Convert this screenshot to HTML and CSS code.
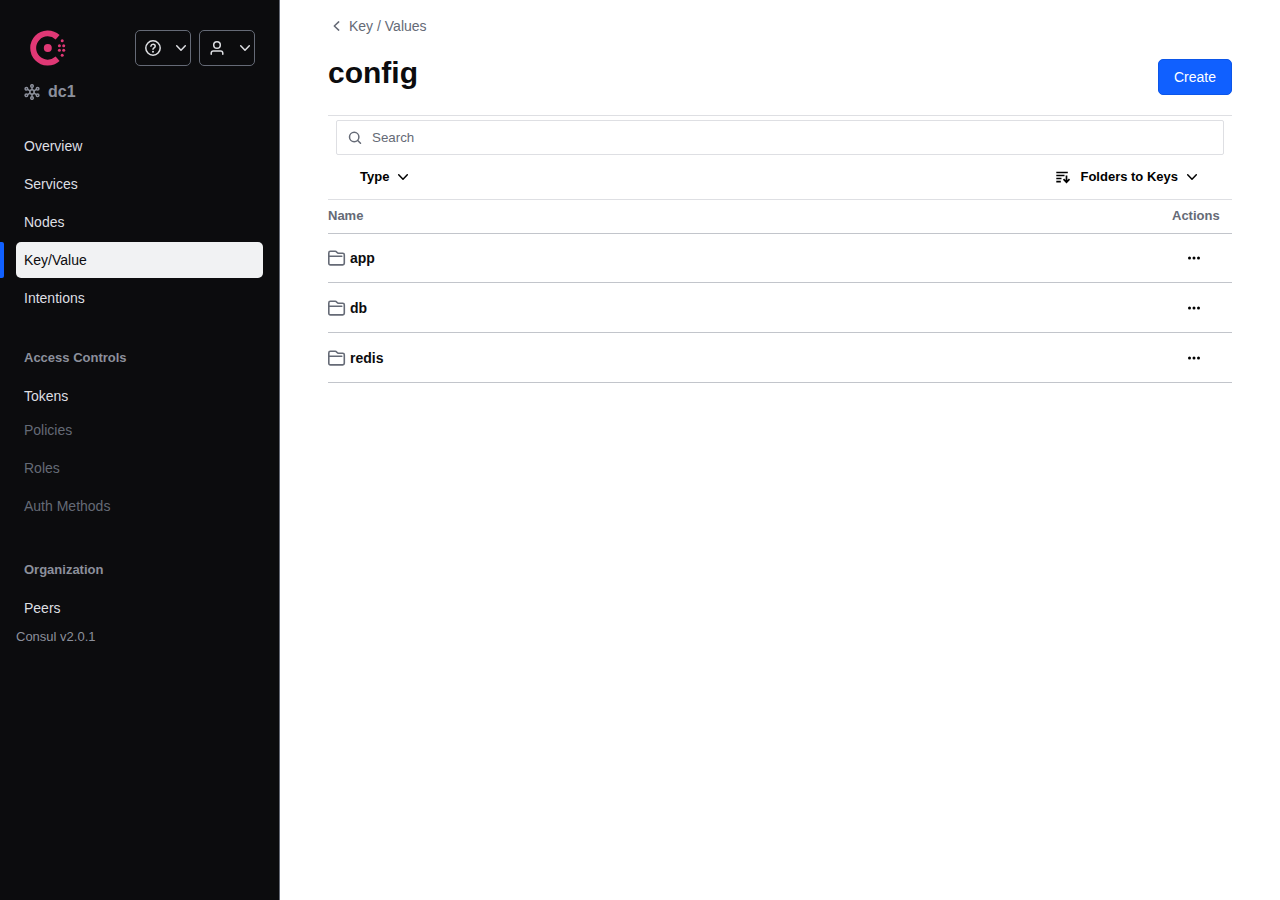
FILE: index.html
```html
<!DOCTYPE html>
<html lang="en">
<head>
<meta charset="utf-8">
<meta name="viewport" content="width=device-width, initial-scale=1">
<title>config - Key / Values - Consul</title>
<link rel="stylesheet" href="styles.css">
</head>
<body>
<div class="app">
  <aside class="sidebar">
    <header class="sidebar-header">
      <a class="logo" href="#" aria-label="Consul">
        <svg width="36" height="36" viewBox="0 0 36 36" fill="#e03875">
          <path d="M27.6 7.200 A14.600 14.600 0 1 0 27.600 28.800" fill="none" stroke="#e03875" stroke-width="5.900"/>
          <circle cx="17.800" cy="18" r="4"/>
          <circle cx="32.200" cy="10.800" r="1.500"/><circle cx="29.400" cy="15.700" r="1.500"/><circle cx="33.700" cy="15.700" r="1.500"/>
          <circle cx="29.400" cy="20.300" r="1.500"/><circle cx="33.700" cy="20.300" r="1.500"/><circle cx="32.200" cy="25.200" r="1.500"/>
        </svg>
      </a>
      <div class="header-actions">
        <button class="menu-button" type="button" aria-label="Help">
          <svg class="icon" viewBox="0 0 16 16"><circle cx="8" cy="8" r="7.200"/><path d="M5.900 6.200C6.100 4.900 7 4.300 8.100 4.300c1.200 0 2.100.8 2.100 1.900C10.200 7.700 8 7.900 8 9.200"/><circle class="dot" cx="8" cy="11.800" r="1"/></svg>
          <svg class="icon" viewBox="0 0 16 16"><path d="M3.700 5.800 8 10.300l4.300-4.500"/></svg>
        </button>
        <button class="menu-button" type="button" aria-label="Account">
          <svg class="icon" viewBox="0 0 16 16"><circle cx="8" cy="5" r="3.300"/><path d="M2.200 14.300v-1c0-1.300.9-2.200 2.200-2.200h7.200c1.300 0 2.200.9 2.200 2.200v1"/></svg>
          <svg class="icon" viewBox="0 0 16 16"><path d="M3.700 5.800 8 10.300l4.300-4.500"/></svg>
        </button>
      </div>
    </header>
    <div class="datacenter">
      <svg class="icon" viewBox="0 0 16 16"><circle cx="8" cy="8" r="2.200"/><circle cx="8" cy="2" r="1.300"/><circle cx="8" cy="14" r="1.300"/><circle cx="2.400" cy="4.800" r="1.300"/><circle cx="13.600" cy="4.800" r="1.300"/><circle cx="2.400" cy="11.200" r="1.300"/><circle cx="13.600" cy="11.200" r="1.300"/><path d="M8 3.500v2.200M8 10.300v2.200M4 5.700l2 1.200M12 5.700l-2 1.200M4 10.300l2-1.200M12 10.300l-2-1.200"/></svg>
      <span>dc1</span>
    </div>
    <nav class="nav">
      <ul class="nav-list">
        <li><a class="nav-link" href="#">Overview</a></li>
        <li><a class="nav-link" href="#">Services</a></li>
        <li><a class="nav-link" href="#">Nodes</a></li>
        <li class="is-active"><a class="nav-link" href="#" aria-current="page">Key/Value</a></li>
        <li><a class="nav-link" href="#">Intentions</a></li>
      </ul>
      <h2 class="nav-title">Access Controls</h2>
      <ul class="nav-list">
        <li><a class="nav-link" href="#">Tokens</a></li>
        <li class="is-disabled">Policies</li>
        <li class="is-disabled">Roles</li>
        <li class="is-disabled">Auth Methods</li>
      </ul>
      <h2 class="nav-title">Organization</h2>
      <ul class="nav-list">
        <li><a class="nav-link" href="#">Peers</a></li>
      </ul>
    </nav>
    <p class="version">Consul v2.0.1</p>
  </aside>

  <main class="main">
    <nav class="breadcrumb" aria-label="Breadcrumb">
      <a href="#"><svg class="icon" viewBox="0 0 16 16"><path d="M10.700 3.900 6.300 8l4.400 4.100"/></svg>Key / Values</a>
    </nav>
    <header class="page-header">
      <h1>config</h1>
      <a class="create" href="#">Create</a>
    </header>
    <div class="filter-bar">
      <div class="search">
        <label for="search" aria-label="Search"><svg class="icon" viewBox="0 0 16 16"><circle cx="7.200" cy="7" r="4.700"/><path d="m10.700 10.500 2.800 2.800"/></svg></label>
        <input id="search" type="search" placeholder="Search">
      </div>
      <div class="filters">
        <button type="button">Type <svg class="icon" viewBox="0 0 16 16"><path d="M3.700 5.800 8 10.300l4.300-4.500"/></svg></button>
        <button type="button">
          <svg class="icon icon-sort" viewBox="0 0 16 16"><path d="M1.300 3.500h11.500M1.300 6.500h8.200M1.300 9.500h5.200M1.300 12.700h4.500M11.500 6.500v6.500M8.500 10.200l3 3 3-3"/></svg>
          Folders to Keys
          <svg class="icon" viewBox="0 0 16 16"><path d="M3.700 5.800 8 10.300l4.300-4.500"/></svg>
        </button>
      </div>
    </div>
    <table class="keys">
      <thead><tr><th scope="col">Name</th><th scope="col" class="actions">Actions</th></tr></thead>
      <tbody>
        <tr>
          <td><a href="#"><svg class="folder" viewBox="0 0 18 18"><path d="M2.400 2.300h4.800c1.700 0 1.600 2 3.300 2h4.200c1 0 1.600.6 1.600 1.500v8.500c0 1-.6 1.600-1.600 1.600H2.400c-1 0-1.600-.6-1.600-1.600V3.900c0-1 .6-1.600 1.600-1.600ZM.8 7.300h13"/></svg>app</a></td>
          <td class="actions"><button type="button" aria-label="Actions for app"><svg class="more" viewBox="0 0 16 16"><circle cx="3.500" cy="8" r="1.500"/><circle cx="8" cy="8" r="1.500"/><circle cx="12.500" cy="8" r="1.500"/></svg></button></td>
        </tr>
        <tr>
          <td><a href="#"><svg class="folder" viewBox="0 0 18 18"><path d="M2.400 2.300h4.800c1.700 0 1.600 2 3.300 2h4.200c1 0 1.600.6 1.600 1.500v8.500c0 1-.6 1.600-1.600 1.600H2.400c-1 0-1.600-.6-1.600-1.600V3.900c0-1 .6-1.600 1.600-1.600ZM.8 7.300h13"/></svg>db</a></td>
          <td class="actions"><button type="button" aria-label="Actions for db"><svg class="more" viewBox="0 0 16 16"><circle cx="3.500" cy="8" r="1.500"/><circle cx="8" cy="8" r="1.500"/><circle cx="12.500" cy="8" r="1.500"/></svg></button></td>
        </tr>
        <tr>
          <td><a href="#"><svg class="folder" viewBox="0 0 18 18"><path d="M2.400 2.300h4.800c1.700 0 1.600 2 3.300 2h4.200c1 0 1.600.6 1.600 1.500v8.500c0 1-.6 1.600-1.600 1.600H2.400c-1 0-1.600-.6-1.600-1.600V3.900c0-1 .6-1.600 1.600-1.600ZM.8 7.300h13"/></svg>redis</a></td>
          <td class="actions"><button type="button" aria-label="Actions for redis"><svg class="more" viewBox="0 0 16 16"><circle cx="3.500" cy="8" r="1.500"/><circle cx="8" cy="8" r="1.500"/><circle cx="12.500" cy="8" r="1.500"/></svg></button></td>
        </tr>
      </tbody>
    </table>
  </main>
</div>
</body>
</html>
```
FILE: styles.css
```css
* { box-sizing: border-box; }
body {
  margin: 0;
  font-family: "Liberation Sans", Arial, sans-serif;
  font-size: 14px;
  line-height: 20px;
  color: #0c0c0e;
  background: #fff;
}
a { color: inherit; text-decoration: none; }
button { font: inherit; color: inherit; background: none; border: 0; padding: 0; cursor: pointer; }
ul { list-style: none; margin: 0; padding: 0; }
h1, h2, p { margin: 0; }

.icon {
  flex: none;
  width: 16px;
  height: 16px;
  fill: none;
  stroke: currentColor;
  stroke-width: 1.5;
  stroke-linecap: round;
  stroke-linejoin: round;
}
.icon .dot { fill: currentColor; stroke: none; }

.app { display: flex; min-height: 100vh; }

/* Sidebar */
.sidebar {
  flex: none;
  width: 280px;
  padding: 30px 16px 16px;
  background: #0c0c0e;
  border-right: 1px solid #656a76;
  color: #dedfe3;
}
.sidebar-header { display: flex; justify-content: space-between; padding: 0 8px 0 14px; }
.logo svg { display: block; }
.header-actions { display: flex; gap: 8px; }
.menu-button {
  display: flex;
  align-items: center;
  justify-content: space-between;
  width: 56px;
  height: 36px;
  padding: 0 1px 0 9px;
  border: 1px solid #656a76;
  border-radius: 5px;
}
.datacenter {
  display: flex;
  align-items: center;
  gap: 8px;
  margin: 14px 8px 24px;
  height: 24px;
  font-size: 16px;
  font-weight: bold;
  color: #8c909c;
}
.nav-list { display: flex; flex-direction: column; gap: 2px; }
.nav-link { display: block; padding: 8px; border-radius: 5px; }
.is-active { position: relative; }
.is-active .nav-link { background: #f1f2f3; color: #0c0c0e; }
.is-active::before {
  content: "";
  position: absolute;
  left: -16px;
  top: 0;
  bottom: 0;
  width: 4px;
  background: #1060ff;
  border-radius: 0 2px 2px 0;
}
.is-disabled { padding: 4px 8px; margin-bottom: 8px; color: #656a76; }
.nav-title { margin: 32px 8px 10px; font-size: 13px; line-height: 20px; color: #8c909c; }
.version { font-size: 13px; line-height: 22px; color: #8c909c; }

/* Content */
.main { flex: 1; min-width: 0; padding: 16px 48px; }
.breadcrumb { display: flex; }
.breadcrumb a { display: flex; align-items: center; gap: 5px; color: #656a76; }
.page-header {
  display: flex;
  align-items: flex-end;
  justify-content: space-between;
  padding: 19px 0 20px;
}
.page-header h1 { margin-bottom: 4px; font-size: 30px; line-height: 36px; }
.create {
  margin-top: 4px;
  padding: 7px 15px;
  border: 1px solid #0c56e9;
  border-radius: 5px;
  background: #1060ff;
  color: #fff;
}
.filter-bar { border-top: 1px solid #dedfe3; border-bottom: 1px solid #dedfe3; padding: 4px 8px 0; }
.search {
  display: flex;
  align-items: center;
  height: 35px;
  border: 1px solid #dedfe3;
  border-radius: 2px;
  color: #656a76;
}
.search label { display: flex; padding: 0 9px 0 10px; }
.search input {
  flex: 1;
  min-width: 0;
  padding: 0;
  border: 0;
  outline: 0;
  background: none;
  font-family: inherit;
  color: #0c0c0e;
}
.search input::placeholder { color: #656a76; }
.filters { display: flex; justify-content: space-between; padding: 12px 24px; }
.filters button { display: flex; align-items: center; gap: 6px; font-size: 13px; font-weight: bold; color: #000; }
.filters .icon-sort { margin-right: 3px; stroke-linecap: butt; stroke-width: 1.7; stroke-linejoin: miter; }

.keys { width: 100%; border-spacing: 0; }
.keys th, .keys td { padding: 0; border-bottom: 1px solid #c2c5cb; }
.keys th { height: 34px; padding-bottom: 1px; text-align: left; font-size: 13px; color: #656a76; }
.keys td { height: 50px; }
.keys tbody tr:first-child td { height: 49px; padding-bottom: 1px; }
.keys td a { display: flex; align-items: center; gap: 4px; font-weight: bold; }
.keys .actions { width: 60px; }
.keys td.actions { padding-left: 14px; }
.keys button { display: block; }
.folder { width: 18px; height: 18px; fill: none; stroke: #656a76; stroke-width: 1.6; stroke-linecap: round; }
.more { display: block; width: 16px; height: 16px; fill: #000; }
```
